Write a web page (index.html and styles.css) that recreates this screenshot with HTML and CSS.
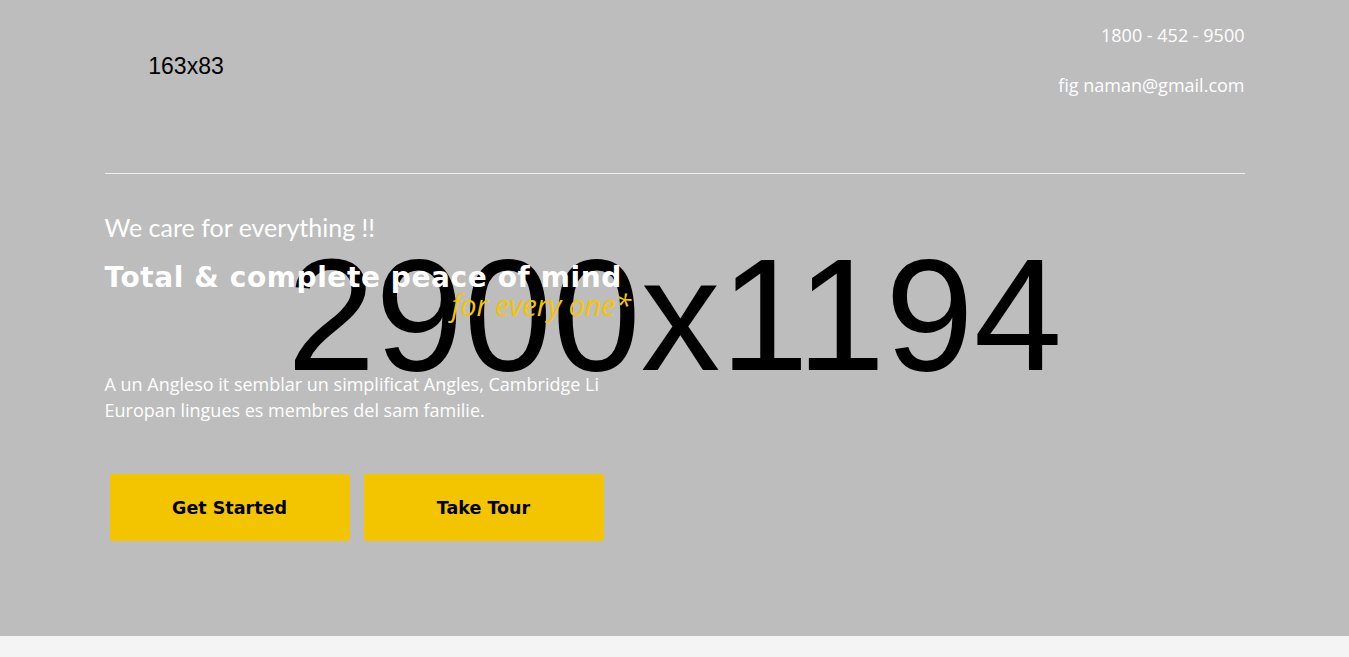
FILE: index.html
```html
<!DOCTYPE html>
<html lang="en">
<head>
<meta charset="utf-8">
<title>Hero</title>
<link rel="stylesheet" href="styles.css">
</head>
<body>
<section class="hero">
  <div class="hero-bg"><span>2900x1194</span></div>
  <div class="hero-inner">
    <header class="topbar">
      <div class="logo"><span>163x83</span></div>
      <div class="contact">
        <p class="phone">1800 - 452 - 9500</p>
        <p class="email">fig naman@gmail.com</p>
      </div>
    </header>
    <hr class="divider">
    <div class="intro">
      <p class="kicker">We care for everything !!</p>
      <h1 class="title">Total &amp; complete peace of mind</h1>
      <p class="tagline">for every one*</p>
      <p class="lead">A un Angleso it semblar un simplificat Angles, Cambridge Li Europan lingues es membres del sam familie.</p>
      <div class="actions">
        <a class="btn" href="#">Get Started</a>
        <a class="btn" href="#">Take Tour</a>
      </div>
    </div>
  </div>
</section>
</body>
</html>
```
FILE: styles.css
```css
* { box-sizing: border-box; }
html, body { margin: 0; padding: 0; }
body {
  background: #f4f4f4;
  font-family: "Open Sans", sans-serif;
  min-height: 657px;
}
.hero {
  display: grid;
  height: 636px;
  background: #bdbdbd;
  overflow: hidden;
}
.hero > * { grid-area: 1 / 1; }
.hero-bg {
  display: flex;
  align-items: center;
  justify-content: center;
  font-family: "Liberation Sans", Arial, sans-serif;
  font-size: 159px;
  line-height: 1;
  color: #000;
  padding-bottom: 6px;
}
.hero-inner {
  width: 1140px;
  margin: 0 auto;
  position: relative;
}
.topbar {
  display: flex;
  justify-content: space-between;
  align-items: flex-start;
  padding-top: 20px;
}
.logo {
  width: 163px;
  height: 83px;
  margin-top: 5px;
  display: flex;
  align-items: center;
  justify-content: center;
  font-family: "Liberation Sans", Arial, sans-serif;
  font-size: 23px;
  color: #000;
}
.contact {
  text-align: right;
  color: #fff;
  font-size: 18px;
  line-height: 27px;
  margin-top: 2px;
}
.contact p { margin: 0; }
.contact .email { margin-top: 23px; }
.divider {
  margin: 65px 0 0;
  border: 0;
  height: 1px;
  background: rgba(255,255,255,0.75);
}
.intro { color: #fff; }
.kicker {
  margin: 38px 0 0;
  font-family: Lato, sans-serif;
  font-size: 25px;
  line-height: 30px;
}
.title {
  margin: 20px 0 0;
  font-family: "DejaVu Sans", sans-serif;
  font-weight: 700;
  font-size: 28px;
  line-height: 32px;
  letter-spacing: 0.6px;
}
.tagline {
  margin: -4px 0 0 347px;
  font-style: italic;
  font-size: 29px;
  line-height: 1;
  letter-spacing: -0.2px;
  color: #f2c500;
}
.lead {
  margin: 52px 0 0;
  width: 540px;
  font-size: 18px;
  line-height: 26px;
}
.actions {
  display: flex;
  gap: 14px;
  margin: 51px 0 0 5px;
}
.btn {
  width: 240px;
  height: 67px;
  display: flex;
  align-items: center;
  justify-content: center;
  background: #f2c500;
  border-radius: 3px;
  color: #000;
  text-decoration: none;
  font-family: "DejaVu Sans", sans-serif;
  font-weight: 700;
  font-size: 17.5px;
}
```
